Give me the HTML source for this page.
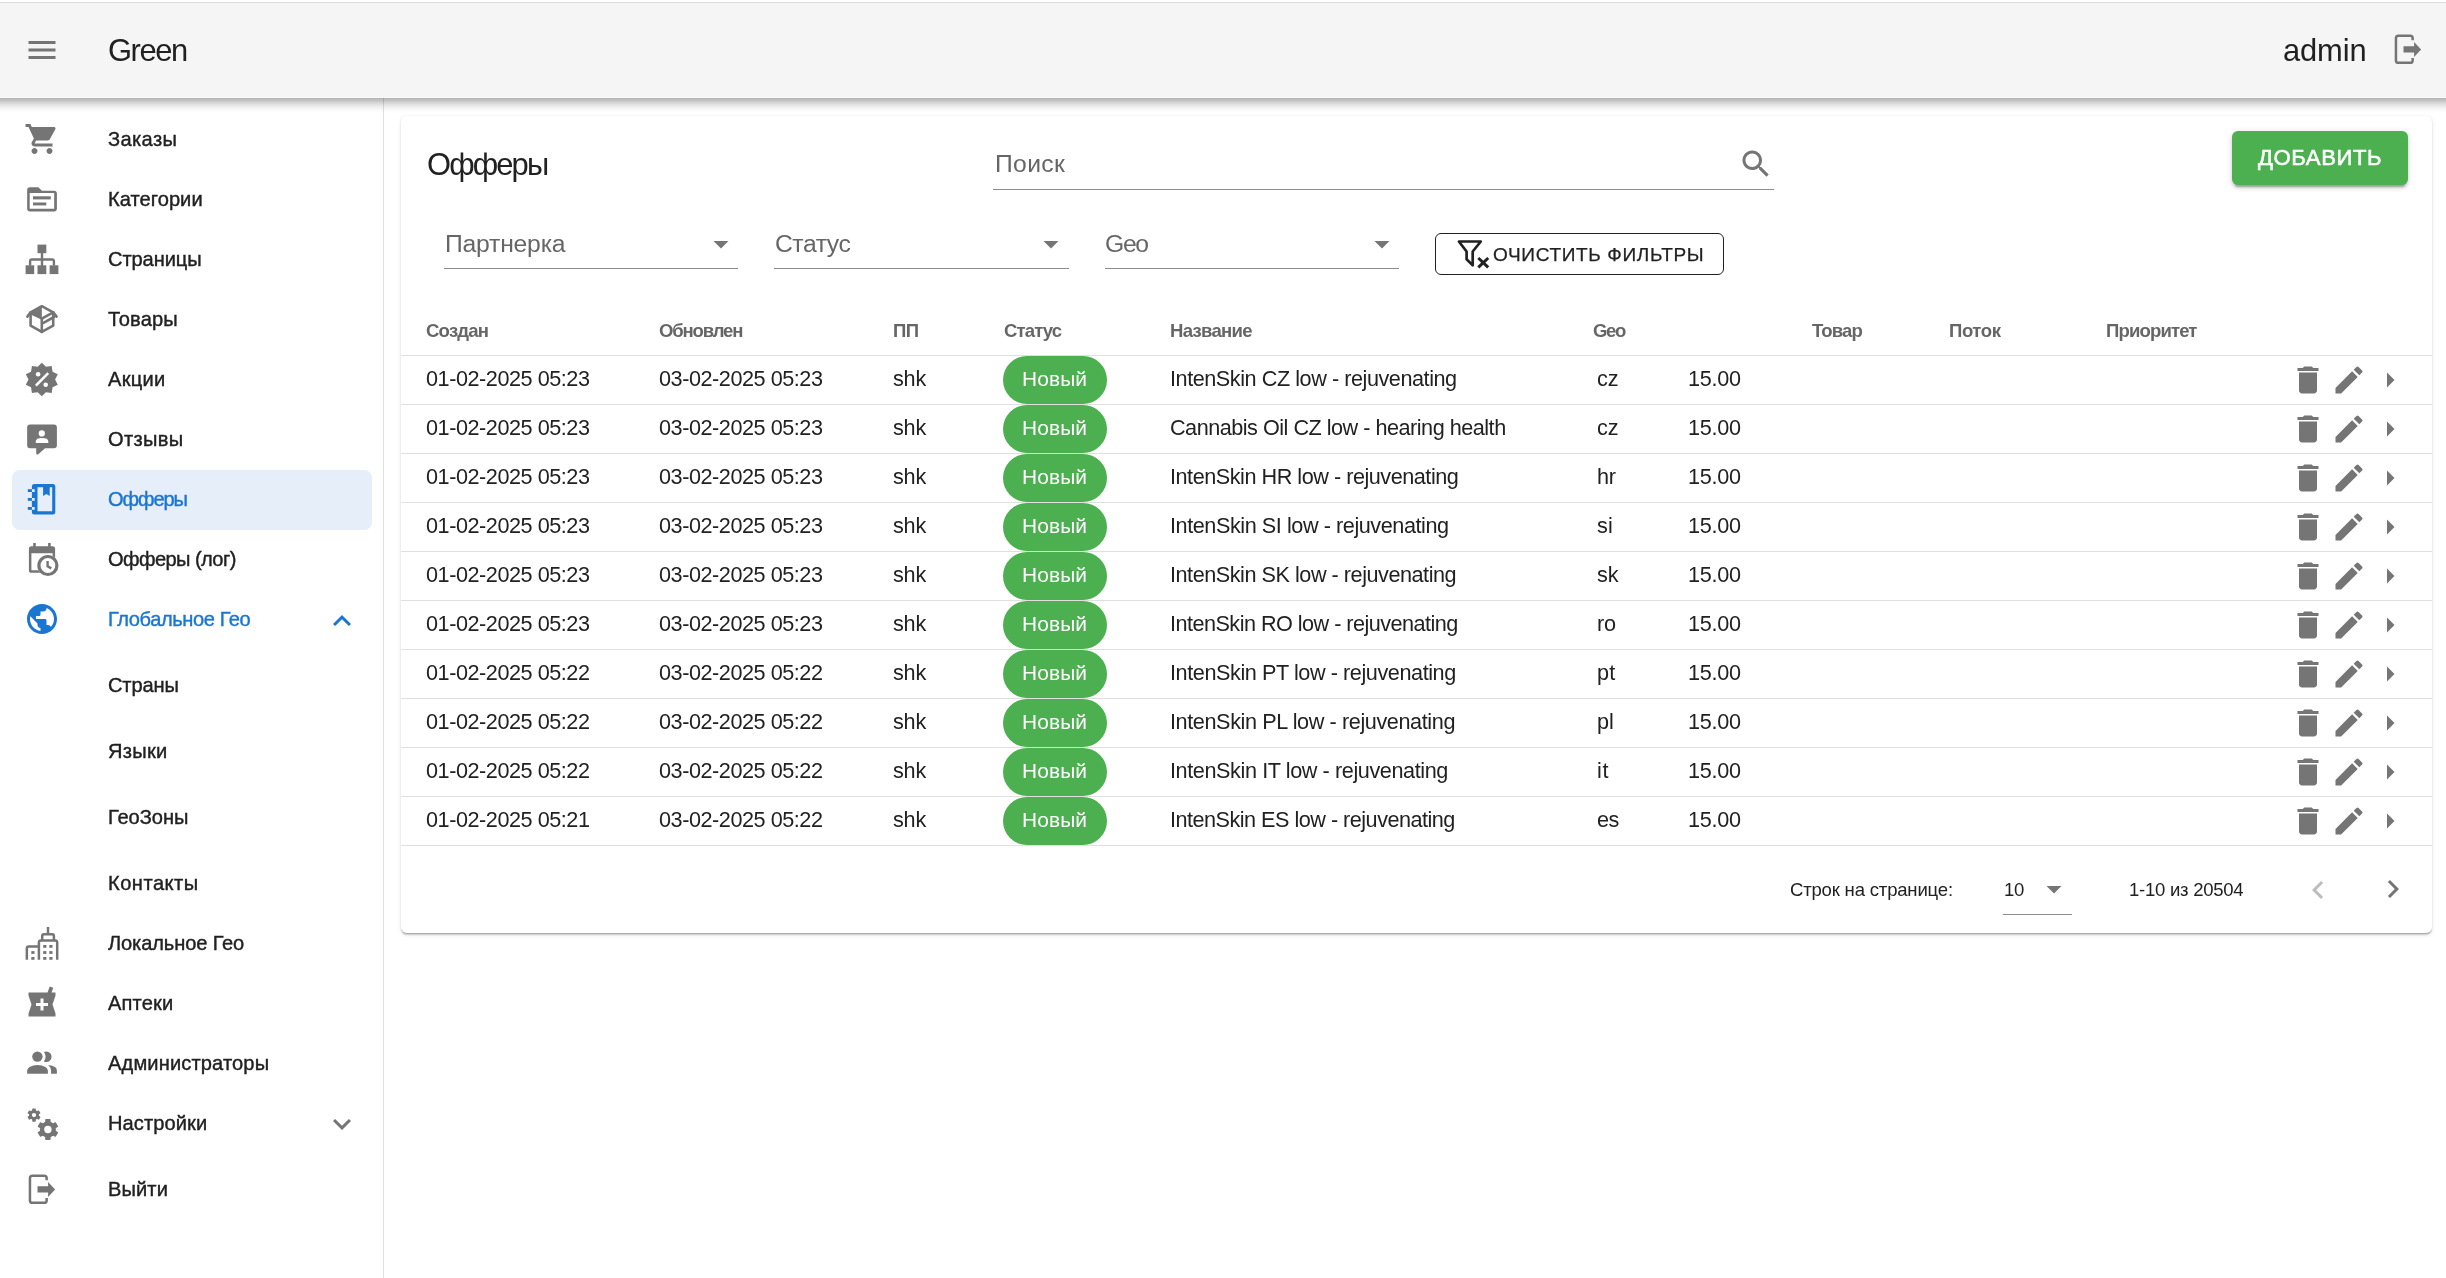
<!DOCTYPE html>
<html><head><meta charset="utf-8"><title>Офферы</title>
<style>
html,body{margin:0;padding:0;background:#fff;}
body{width:2446px;height:1278px;position:relative;overflow:hidden;font-family:"Liberation Sans",sans-serif;}
.t{position:absolute;white-space:nowrap;line-height:normal;will-change:transform;}
svg{display:block}
</style></head><body>

<div style="position:absolute;left:0px;top:2px;width:2446px;height:1px;background:#dcdcdc"></div>
<div style="position:absolute;left:0px;top:3px;width:2446px;height:94px;background:#f5f5f5;z-index:5"></div>
<div style="position:absolute;left:0px;top:97px;width:2446px;height:1px;background:#f9f9f9;z-index:5"></div>
<div style="position:absolute;left:0px;top:98px;width:2446px;height:15px;background:linear-gradient(rgba(0,0,0,.298) 0px, rgba(0,0,0,.235) 2.5px, rgba(0,0,0,.173) 4.5px, rgba(0,0,0,.118) 6.5px, rgba(0,0,0,.075) 8.5px, rgba(0,0,0,.039) 10.5px, rgba(0,0,0,.018) 12.5px, rgba(0,0,0,0) 15px);z-index:5"></div>
<div style="position:absolute;left:0;top:0;width:2446px;height:98px;z-index:6">
<svg style="position:absolute;left:24px;top:31.5px;" width="36" height="36" viewBox="0 0 24 24"><path fill="#757575" d="M3 18h18v-2H3v2zm0-5h18v-2H3v2zm0-7v2h18V6H3z"/></svg>
<div class="t" style="left:108px;top:33px;font-size:30.9px;color:#212121;letter-spacing:-1.428px;">Green</div>
<div class="t" style="left:2283px;top:33px;font-size:30.9px;color:#212121;letter-spacing:-0.144px;">admin</div>
</div>
<div style="position:absolute;left:383px;top:98px;width:1px;height:1180px;background:#e0e0e0"></div>
<div style="position:absolute;left:12px;top:470px;width:360px;height:60px;background:#e6eef9;border-radius:8px"></div>
<div class="t" style="left:108px;top:128px;font-size:20.09px;color:#212121;letter-spacing:0.365px;-webkit-text-stroke:0.4px #212121;">Заказы</div>
<svg style="position:absolute;left:24px;top:121px;" width="36" height="36" viewBox="0 0 24 24"><path fill="#757575" d="M7 18c-1.1 0-1.99.9-1.99 2S5.9 22 7 22s2-.9 2-2-.9-2-2-2zM1 2v2h2l3.6 7.59-1.35 2.45c-.16.28-.25.61-.25.96 0 1.1.9 2 2 2h12v-2H7.42c-.14 0-.25-.11-.25-.25l.03-.12.9-1.63h7.45c.75 0 1.41-.41 1.75-1.03l3.58-6.49c.08-.14.12-.31.12-.48 0-.55-.45-1-1-1H5.21l-.94-2H1zm16 16c-1.1 0-1.99.9-1.99 2s.89 2 1.99 2 2-.9 2-2-.9-2-2-2z"/></svg>
<div class="t" style="left:108px;top:188px;font-size:20.09px;color:#212121;letter-spacing:0.049px;-webkit-text-stroke:0.4px #212121;">Категории</div>
<div class="t" style="left:108px;top:248px;font-size:20.09px;color:#212121;letter-spacing:-0.086px;-webkit-text-stroke:0.4px #212121;">Страницы</div>
<div class="t" style="left:108px;top:308px;font-size:20.09px;color:#212121;letter-spacing:0.130px;-webkit-text-stroke:0.4px #212121;">Товары</div>
<div class="t" style="left:108px;top:368px;font-size:20.09px;color:#212121;letter-spacing:0.287px;-webkit-text-stroke:0.4px #212121;">Акции</div>
<div class="t" style="left:108px;top:428px;font-size:20.09px;color:#212121;letter-spacing:0.331px;-webkit-text-stroke:0.4px #212121;">Отзывы</div>
<div class="t" style="left:108px;top:488px;font-size:20.09px;color:#1976d2;letter-spacing:-1.081px;-webkit-text-stroke:0.4px #1976d2;">Офферы</div>
<div class="t" style="left:108px;top:548px;font-size:20.09px;color:#212121;letter-spacing:-0.589px;-webkit-text-stroke:0.4px #212121;">Офферы (лог)</div>
<div class="t" style="left:108px;top:608px;font-size:20.09px;color:#1976d2;letter-spacing:-0.415px;-webkit-text-stroke:0.4px #1976d2;">Глобальное Гео</div>
<svg style="position:absolute;left:24px;top:601px;" width="36" height="36" viewBox="0 0 24 24"><path fill="#1976d2" d="M12 2C6.48 2 2 6.48 2 12s4.48 10 10 10 10-4.48 10-10S17.52 2 12 2zm-1 17.93c-3.95-.49-7-3.85-7-7.93 0-.62.08-1.21.21-1.79L9 15v1c0 1.1.9 2 2 2v1.93zm6.9-2.54c-.26-.81-1-1.39-1.9-1.39h-1v-3c0-.55-.45-1-1-1H8v-2h2c.55 0 1-.45 1-1V7h2c1.1 0 2-.9 2-2v-.41c2.93 1.19 5 4.06 5 7.41 0 2.08-.8 3.97-2.1 5.39z"/></svg>
<div class="t" style="left:108px;top:674px;font-size:20.09px;color:#212121;letter-spacing:-0.141px;-webkit-text-stroke:0.4px #212121;">Страны</div>
<div class="t" style="left:108px;top:740px;font-size:20.09px;color:#212121;letter-spacing:0.278px;-webkit-text-stroke:0.4px #212121;">Языки</div>
<div class="t" style="left:108px;top:806px;font-size:20.09px;color:#212121;letter-spacing:-0.047px;-webkit-text-stroke:0.4px #212121;">ГеоЗоны</div>
<div class="t" style="left:108px;top:872px;font-size:20.09px;color:#212121;letter-spacing:0.498px;-webkit-text-stroke:0.4px #212121;">Контакты</div>
<div class="t" style="left:108px;top:932px;font-size:20.09px;color:#212121;letter-spacing:-0.124px;-webkit-text-stroke:0.4px #212121;">Локальное Гео</div>
<div class="t" style="left:108px;top:992px;font-size:20.09px;color:#212121;letter-spacing:0.143px;-webkit-text-stroke:0.4px #212121;">Аптеки</div>
<svg style="position:absolute;left:24px;top:985px;" width="36" height="36" viewBox="0 0 24 24"><path fill="#757575" d="M21 5h-2.64l1.14-3.14L17.15 1l-1.46 4H3v2l2 6-2 6v2h18v-2l-2-6 2-6V5zm-5 9h-3v3h-2v-3H8v-2h3V9h2v3h3v2z"/></svg>
<div class="t" style="left:108px;top:1052px;font-size:20.09px;color:#212121;letter-spacing:0.137px;-webkit-text-stroke:0.4px #212121;">Администраторы</div>
<div class="t" style="left:108px;top:1112px;font-size:20.09px;color:#212121;letter-spacing:0.095px;-webkit-text-stroke:0.4px #212121;">Настройки</div>
<div class="t" style="left:108px;top:1178px;font-size:20.09px;color:#212121;letter-spacing:0.103px;-webkit-text-stroke:0.4px #212121;">Выйти</div>
<svg style="position:absolute;left:324px;top:602.5px;" width="36" height="36" viewBox="0 0 24 24"><path fill="#1976d2" d="M12 8l-6 6 1.41 1.41L12 10.83l4.59 4.58L18 14z"/></svg>
<svg style="position:absolute;left:324px;top:1105.5px;" width="36" height="36" viewBox="0 0 24 24"><path fill="#757575" d="M16.59 8.59 12 13.17 7.41 8.59 6 10l6 6 6-6z"/></svg>
<svg style="position:absolute;left:16px;top:176px;z-index:7" width="50" height="50" viewBox="0 0 50 50"><path fill="#757575" fill-rule="evenodd" d="M14 11.35H22.3L26 14.7H38Q40.9 14.7 40.9 17.6V32.5Q40.9 35.4 38 35.4H14Q11.15 35.4 11.15 32.5V14.2Q11.15 11.35 14 11.35ZM13.7 17V32.7H38.2V17Z"/><rect fill="#757575" x="17" y="20.3" width="17.8" height="3.1"/><rect fill="#757575" x="17" y="26.5" width="13.3" height="2.9"/></svg>
<svg style="position:absolute;left:16px;top:236px;z-index:7" width="50" height="50" viewBox="0 0 50 50"><g fill="#757575"><rect x="21.5" y="8.6" width="8.8" height="8.6"/><rect x="24.8" y="17" width="2.4" height="13"/><path d="M12.9 29.5V25.3Q12.9 22.3 15.9 22.3H36.1Q39.1 22.3 39.1 25.3V29.5H36.7V24.8H15.3V29.5Z"/><rect x="9.6" y="29.3" width="8.6" height="8.8"/><rect x="21.5" y="29.3" width="8.8" height="8.8"/><rect x="33.6" y="29.3" width="8.8" height="8.8"/></g></svg>
<svg style="position:absolute;left:16px;top:296px;z-index:7" width="50" height="50" viewBox="0 0 50 50"><g fill="none" stroke="#757575" stroke-width="2.6" stroke-linejoin="round" stroke-linecap="round"><path d="M14.6 16.3L25.8 10.2L37.2 16.3V29.6L25.8 35.9L14.6 29.6Z"/><path d="M25.8 23V35.9"/><path d="M14.6 16.3L11.4 20.6"/><path d="M37.2 16.3L40.6 20.6"/><path d="M25.8 22.6L37.2 16.3"/><path d="M27.5 26.8L38 21"/></g><path fill="#757575" d="M14.6 16.3L25.8 10.2V23.8L15.6 19Z"/></svg>
<svg style="position:absolute;left:16px;top:356px;z-index:7" width="50" height="50" viewBox="0 0 50 50"><polygon fill="#757575" points="25.80,6.70 29.91,10.85 35.67,9.91 36.56,15.68 41.78,18.31 39.10,23.50 41.78,28.69 36.56,31.32 35.67,37.09 29.91,36.15 25.80,40.30 21.69,36.15 15.93,37.09 15.04,31.32 9.82,28.69 12.50,23.50 9.82,18.31 15.04,15.68 15.93,9.91 21.69,10.85"/><circle fill="#fff" cx="22.1" cy="18.2" r="2.3"/><circle fill="#fff" cx="29.7" cy="28.8" r="2.3"/><path stroke="#fff" stroke-width="2.6" d="M19.9 29.6L32.2 17.1"/></svg>
<svg style="position:absolute;left:16px;top:416px;z-index:7" width="50" height="50" viewBox="0 0 50 50"><path fill="#757575" d="M14.2 8.4H37.9Q40.9 8.4 40.9 11.4V29.3Q40.9 32.3 37.9 32.3H29.1L22.2 38.2Q20.2 39.2 20.2 37V32.3H14.2Q11.15 32.3 11.15 29.3V11.4Q11.15 8.4 14.2 8.4Z"/><circle fill="#fff" cx="25.8" cy="17.4" r="3.1"/><path fill="#fff" d="M19.8 27V25.3Q19.8 21.9 25.9 21.9Q32.3 21.9 32.3 25.3V27Z"/></svg>
<svg style="position:absolute;left:16px;top:476px;z-index:7" width="50" height="50" viewBox="0 0 50 50"><path fill="#1976d2" fill-rule="evenodd" d="M18.4 8H36.8Q39.3 8 39.3 10.5V35.9Q39.3 38.4 36.8 38.4H18.4Q15.9 38.4 15.9 35.9V10.5Q15.9 8 18.4 8ZM21.5 11.2V35.25H36.2V11.2Z"/><path fill="#1976d2" d="M27.1 11H33.7V20L30.4 18L27.1 20Z"/><rect x="11.8" y="13.2" width="4.2" height="2.8" fill="#1976d2"/><rect x="15.9" y="13.2" width="2.8" height="2.8" fill="#e6eef9"/><rect x="11.8" y="22.0" width="4.2" height="2.8" fill="#1976d2"/><rect x="15.9" y="22.0" width="2.8" height="2.8" fill="#e6eef9"/><rect x="11.8" y="31.0" width="4.2" height="2.8" fill="#1976d2"/><rect x="15.9" y="31.0" width="2.8" height="2.8" fill="#e6eef9"/></svg>
<svg style="position:absolute;left:16px;top:536px;z-index:7" width="50" height="50" viewBox="0 0 50 50"><g fill="#757575"><path fill-rule="evenodd" d="M15.5 10.2H36.5Q39.1 10.2 39.1 12.8V34.2Q39.1 36.8 36.5 36.8H15.5Q12.9 36.8 12.9 34.2V12.8Q12.9 10.2 15.5 10.2ZM15.4 17.2V34.2H36.6V17.2Z"/><rect x="17.2" y="7" width="2.6" height="4"/><rect x="32.1" y="7" width="2.6" height="4"/></g><circle cx="31.9" cy="29.5" r="10.6" fill="#fff"/><circle cx="31.9" cy="29.5" r="9" fill="none" stroke="#757575" stroke-width="3.2"/><path d="M31.6 25V30.2L35.3 32.4" fill="none" stroke="#757575" stroke-width="2.4"/></svg>
<svg style="position:absolute;left:16px;top:920px;z-index:7" width="50" height="50" viewBox="0 0 50 50"><g fill="none" stroke="#757575" stroke-width="2.5"><path d="M10.85 39.8V28.3Q10.85 26.4 12.8 26.4H22.9"/><path d="M22.9 39.8V22.5Q22.9 20.4 25 20.4H39.1Q41.2 20.4 41.2 22.5V39.8"/><path d="M26.2 20.4V16.1Q26.2 14.3 28 14.3H36.1Q37.9 14.3 37.9 16.1V20.4"/><path d="M32 7V14.3"/></g><g fill="#757575"><rect x="15.3" y="31.1" width="3.2" height="2.8"/><rect x="15.3" y="37" width="3.2" height="2.8"/><rect x="27.2" y="25" width="3.2" height="2.8"/><rect x="33.3" y="25" width="3.2" height="2.8"/><rect x="27.2" y="31.1" width="3.2" height="2.8"/><rect x="33.3" y="31.1" width="3.2" height="2.8"/><rect x="27.2" y="37" width="3.2" height="2.8"/><rect x="33.3" y="37" width="3.2" height="2.8"/></g></svg>
<svg style="position:absolute;left:16px;top:1040px;z-index:7" width="50" height="50" viewBox="0 0 50 50"><g fill="#757575"><circle cx="21.4" cy="16.6" r="5.2"/><path d="M27.9 11.9Q29 11.5 30.4 11.5A5.2 5.2 0 0 1 30.4 21.9Q29 21.9 27.9 21.4Q29.6 19.4 29.6 16.6Q29.6 13.9 27.9 11.9Z"/><path d="M11.15 33.8V30.8Q11.15 28.4 13.6 27Q17 25 21.5 25Q26 25 29.4 27Q31.9 28.4 31.9 30.8V33.8Z"/><path d="M32.3 25Q36.5 25.3 39 27Q40.9 28.3 40.9 30.8V33.8H35.1V30.8Q35.1 27.7 32.3 25Z"/></g></svg>
<svg style="position:absolute;left:16px;top:1100px;z-index:7" width="50" height="50" viewBox="0 0 50 50"><circle cx="18" cy="15.06" r="5.0" fill="#757575"/><rect x="16.20" y="8.46" width="3.6" height="6.60" rx="0.6" fill="#757575" transform="rotate(0 18 15.06)"/><rect x="16.20" y="8.46" width="3.6" height="6.60" rx="0.6" fill="#757575" transform="rotate(60 18 15.06)"/><rect x="16.20" y="8.46" width="3.6" height="6.60" rx="0.6" fill="#757575" transform="rotate(120 18 15.06)"/><rect x="16.20" y="8.46" width="3.6" height="6.60" rx="0.6" fill="#757575" transform="rotate(180 18 15.06)"/><rect x="16.20" y="8.46" width="3.6" height="6.60" rx="0.6" fill="#757575" transform="rotate(240 18 15.06)"/><rect x="16.20" y="8.46" width="3.6" height="6.60" rx="0.6" fill="#757575" transform="rotate(300 18 15.06)"/><circle cx="18" cy="15.06" r="2.15" fill="#fff"/><circle cx="31.9" cy="29.5" r="8.0" fill="#757575"/><rect x="29.20" y="19.10" width="5.4" height="10.40" rx="0.6" fill="#757575" transform="rotate(0 31.9 29.5)"/><rect x="29.20" y="19.10" width="5.4" height="10.40" rx="0.6" fill="#757575" transform="rotate(60 31.9 29.5)"/><rect x="29.20" y="19.10" width="5.4" height="10.40" rx="0.6" fill="#757575" transform="rotate(120 31.9 29.5)"/><rect x="29.20" y="19.10" width="5.4" height="10.40" rx="0.6" fill="#757575" transform="rotate(180 31.9 29.5)"/><rect x="29.20" y="19.10" width="5.4" height="10.40" rx="0.6" fill="#757575" transform="rotate(240 31.9 29.5)"/><rect x="29.20" y="19.10" width="5.4" height="10.40" rx="0.6" fill="#757575" transform="rotate(300 31.9 29.5)"/><circle cx="31.9" cy="29.5" r="3.7" fill="#fff"/></svg>
<svg style="position:absolute;left:16px;top:1164px;z-index:7" width="50" height="50" viewBox="0 0 50 50"><path fill="none" stroke="#757575" stroke-width="2.5" d="M30.65 16.2V14.3Q30.65 11.85 28.2 11.85H16.4Q13.95 11.85 13.95 14.3V36.4Q13.95 38.85 16.4 38.85H28.2Q30.65 38.85 30.65 36.4V34"/><path fill="#757575" d="M21.5 22.3H32.1V18L39.1 25.4L32.1 32.9V28.4H21.5Z"/></svg>
<svg style="position:absolute;left:2382px;top:24px;z-index:7" width="50" height="50" viewBox="0 0 50 50"><path fill="none" stroke="#757575" stroke-width="2.5" d="M30.65 16.2V14.3Q30.65 11.85 28.2 11.85H16.4Q13.95 11.85 13.95 14.3V36.4Q13.95 38.85 16.4 38.85H28.2Q30.65 38.85 30.65 36.4V34"/><path fill="#757575" d="M21.5 22.3H32.1V18L39.1 25.4L32.1 32.9V28.4H21.5Z"/></svg>
<svg style="position:absolute;left:1450px;top:233px;z-index:7" width="50" height="42" viewBox="0 0 50 42"><g fill="none" stroke="#212121" stroke-width="2.7" stroke-linejoin="round"><path d="M8.9 8.5H30.8L22.7 18.5V32.3L16.6 26.3V18.5Z"/><path stroke-width="3" d="M28.3 25L38.2 34.3M38.2 25L28.3 34.3"/></g></svg>
<div style="position:absolute;left:401px;top:116px;width:2031px;height:817px;background:#fff;border-radius:6px;box-shadow:0 2px 1.5px -1.5px rgba(0,0,0,.2),0 1.5px 1.5px 0 rgba(0,0,0,.12),0 1.5px 4.5px 0 rgba(0,0,0,.10)"></div>
<div class="t" style="left:427px;top:147px;font-size:30.9px;color:#212121;letter-spacing:-1.865px;">Офферы</div>
<div class="t" style="left:995px;top:150px;font-size:24.72px;color:#666;letter-spacing:0.341px;">Поиск</div>
<div style="position:absolute;left:993px;top:189px;width:781px;height:1px;background:#8c8c8c"></div>
<svg style="position:absolute;left:1737.5px;top:145.5px;" width="36" height="36" viewBox="0 0 24 24"><path fill="#757575" d="M15.5 14h-.79l-.28-.27C15.41 12.59 16 11.11 16 9.5 16 5.91 13.09 3 9.5 3S3 5.91 3 9.5 5.91 16 9.5 16c1.61 0 3.09-.59 4.23-1.57l.27.28v.79l5 4.99L20.49 19l-4.99-5zm-6 0C7.01 14 5 11.99 5 9.5S7.01 5 9.5 5 14 7.01 14 9.5 11.99 14 9.5 14z"/></svg>
<div style="position:absolute;left:2232px;top:131px;width:176px;height:54px;background:#4caf50;border-radius:6px;box-shadow:0 4.5px 1.5px -3px rgba(0,0,0,.2),0 3px 3px 0 rgba(0,0,0,.14),0 1.5px 7.5px 0 rgba(0,0,0,.12)"></div>
<div class="t" style="left:2258px;top:145px;font-size:22.14px;color:#fff;letter-spacing:0.543px;-webkit-text-stroke:0.55px #fff;">ДОБАВИТЬ</div>
<div class="t" style="left:445px;top:230px;font-size:24.72px;color:#666;letter-spacing:-0.219px;">Партнерка</div>
<div style="position:absolute;left:444px;top:268px;width:294px;height:1px;background:#8c8c8c"></div>
<svg style="position:absolute;left:702.5px;top:225.5px;" width="36" height="36" viewBox="0 0 24 24"><path fill="#757575" d="M7 10l5 5 5-5z"/></svg>
<div class="t" style="left:774.5px;top:230px;font-size:24.72px;color:#666;letter-spacing:-0.477px;">Статус</div>
<div style="position:absolute;left:774px;top:268px;width:295px;height:1px;background:#8c8c8c"></div>
<svg style="position:absolute;left:1032.5px;top:225.5px;" width="36" height="36" viewBox="0 0 24 24"><path fill="#757575" d="M7 10l5 5 5-5z"/></svg>
<div class="t" style="left:1104.5px;top:230px;font-size:24.72px;color:#666;letter-spacing:-1.323px;">Geo</div>
<div style="position:absolute;left:1105px;top:268px;width:294px;height:1px;background:#8c8c8c"></div>
<svg style="position:absolute;left:1363.5px;top:225.5px;" width="36" height="36" viewBox="0 0 24 24"><path fill="#757575" d="M7 10l5 5 5-5z"/></svg>
<div style="position:absolute;left:1435px;top:233px;width:289px;height:42px;box-sizing:border-box;border:1.5px solid #212121;border-radius:6px"></div>
<div class="t" style="left:1493px;top:244px;font-size:19.05px;color:#212121;letter-spacing:0.643px;-webkit-text-stroke:0.25px #212121;">ОЧИСТИТЬ ФИЛЬТРЫ</div>
<div class="t" style="left:426px;top:320px;font-size:18.54px;color:#666;font-weight:700;letter-spacing:-0.776px;">Создан</div>
<div class="t" style="left:659px;top:320px;font-size:18.54px;color:#666;font-weight:700;letter-spacing:-1.156px;">Обновлен</div>
<div class="t" style="left:893px;top:320px;font-size:18.54px;color:#666;font-weight:700;letter-spacing:-0.539px;">ПП</div>
<div class="t" style="left:1004px;top:320px;font-size:18.54px;color:#666;font-weight:700;letter-spacing:-0.865px;">Статус</div>
<div class="t" style="left:1170px;top:320px;font-size:18.54px;color:#666;font-weight:700;letter-spacing:-0.709px;">Название</div>
<div class="t" style="left:1593px;top:320px;font-size:18.54px;color:#666;font-weight:700;letter-spacing:-1.307px;">Geo</div>
<div class="t" style="left:1812px;top:320px;font-size:18.54px;color:#666;font-weight:700;letter-spacing:-0.847px;">Товар</div>
<div class="t" style="left:1949px;top:320px;font-size:18.54px;color:#666;font-weight:700;letter-spacing:-0.409px;">Поток</div>
<div class="t" style="left:2106px;top:320px;font-size:18.54px;color:#666;font-weight:700;letter-spacing:-0.854px;">Приоритет</div>
<div style="position:absolute;left:401px;top:355px;width:2031px;height:1px;background:#e0e0e0"></div>
<div style="position:absolute;left:401px;top:404px;width:2031px;height:1px;background:#e0e0e0"></div>
<div class="t" style="left:426px;top:366px;font-size:21.63px;color:#212121;letter-spacing:-0.451px;">01-02-2025 05:23</div>
<div class="t" style="left:659px;top:366px;font-size:21.63px;color:#212121;letter-spacing:-0.451px;">03-02-2025 05:23</div>
<div class="t" style="left:893px;top:366px;font-size:21.63px;color:#212121;letter-spacing:-0.198px;">shk</div>
<div style="position:absolute;left:1003px;top:356px;width:104px;height:48px;background:#4caf50;border-radius:24px"></div>
<div class="t" style="left:1022px;top:367px;font-size:20.91px;color:#fff;letter-spacing:0.109px;">Новый</div>
<div class="t" style="left:1170px;top:366px;font-size:21.63px;color:#212121;letter-spacing:-0.445px;">IntenSkin CZ low - rejuvenating</div>
<div class="t" style="left:1597px;top:366px;font-size:21.63px;color:#212121;letter-spacing:-0.102px;">cz</div>
<div class="t" style="left:1688px;top:366px;font-size:21.63px;color:#212121;letter-spacing:-0.275px;">15.00</div>
<svg style="position:absolute;left:2289.7px;top:361.5px;" width="36" height="36" viewBox="0 0 24 24"><path fill="#757575" d="M6 19c0 1.1.9 2 2 2h8c1.1 0 2-.9 2-2V7H6v12zM19 4h-3.5l-1-1h-5l-1 1H5v2h14V4z"/></svg>
<svg style="position:absolute;left:2330.6px;top:361.5px;" width="36" height="36" viewBox="0 0 24 24"><path fill="#757575" d="M3 17.25V21h3.75L17.81 9.94l-3.75-3.75L3 17.25zM20.71 7.04c.39-.39.39-1.02 0-1.41l-2.34-2.34a.9959.9959 0 0 0-1.41 0l-1.83 1.83 3.75 3.75 1.83-1.83z"/></svg>
<svg style="position:absolute;left:2372px;top:361.5px;" width="36" height="36" viewBox="0 0 24 24"><path fill="#757575" d="M10 17l5-5-5-5v10z"/></svg>
<div style="position:absolute;left:401px;top:453px;width:2031px;height:1px;background:#e0e0e0"></div>
<div class="t" style="left:426px;top:415px;font-size:21.63px;color:#212121;letter-spacing:-0.451px;">01-02-2025 05:23</div>
<div class="t" style="left:659px;top:415px;font-size:21.63px;color:#212121;letter-spacing:-0.451px;">03-02-2025 05:23</div>
<div class="t" style="left:893px;top:415px;font-size:21.63px;color:#212121;letter-spacing:-0.198px;">shk</div>
<div style="position:absolute;left:1003px;top:405px;width:104px;height:48px;background:#4caf50;border-radius:24px"></div>
<div class="t" style="left:1022px;top:416px;font-size:20.91px;color:#fff;letter-spacing:0.109px;">Новый</div>
<div class="t" style="left:1170px;top:415px;font-size:21.63px;color:#212121;letter-spacing:-0.492px;">Cannabis Oil CZ low - hearing health</div>
<div class="t" style="left:1597px;top:415px;font-size:21.63px;color:#212121;letter-spacing:-0.102px;">cz</div>
<div class="t" style="left:1688px;top:415px;font-size:21.63px;color:#212121;letter-spacing:-0.275px;">15.00</div>
<svg style="position:absolute;left:2289.7px;top:410.5px;" width="36" height="36" viewBox="0 0 24 24"><path fill="#757575" d="M6 19c0 1.1.9 2 2 2h8c1.1 0 2-.9 2-2V7H6v12zM19 4h-3.5l-1-1h-5l-1 1H5v2h14V4z"/></svg>
<svg style="position:absolute;left:2330.6px;top:410.5px;" width="36" height="36" viewBox="0 0 24 24"><path fill="#757575" d="M3 17.25V21h3.75L17.81 9.94l-3.75-3.75L3 17.25zM20.71 7.04c.39-.39.39-1.02 0-1.41l-2.34-2.34a.9959.9959 0 0 0-1.41 0l-1.83 1.83 3.75 3.75 1.83-1.83z"/></svg>
<svg style="position:absolute;left:2372px;top:410.5px;" width="36" height="36" viewBox="0 0 24 24"><path fill="#757575" d="M10 17l5-5-5-5v10z"/></svg>
<div style="position:absolute;left:401px;top:502px;width:2031px;height:1px;background:#e0e0e0"></div>
<div class="t" style="left:426px;top:464px;font-size:21.63px;color:#212121;letter-spacing:-0.451px;">01-02-2025 05:23</div>
<div class="t" style="left:659px;top:464px;font-size:21.63px;color:#212121;letter-spacing:-0.451px;">03-02-2025 05:23</div>
<div class="t" style="left:893px;top:464px;font-size:21.63px;color:#212121;letter-spacing:-0.198px;">shk</div>
<div style="position:absolute;left:1003px;top:454px;width:104px;height:48px;background:#4caf50;border-radius:24px"></div>
<div class="t" style="left:1022px;top:465px;font-size:20.91px;color:#fff;letter-spacing:0.109px;">Новый</div>
<div class="t" style="left:1170px;top:464px;font-size:21.63px;color:#212121;letter-spacing:-0.469px;">IntenSkin HR low - rejuvenating</div>
<div class="t" style="left:1597px;top:464px;font-size:21.63px;color:#212121;letter-spacing:-0.273px;">hr</div>
<div class="t" style="left:1688px;top:464px;font-size:21.63px;color:#212121;letter-spacing:-0.275px;">15.00</div>
<svg style="position:absolute;left:2289.7px;top:459.5px;" width="36" height="36" viewBox="0 0 24 24"><path fill="#757575" d="M6 19c0 1.1.9 2 2 2h8c1.1 0 2-.9 2-2V7H6v12zM19 4h-3.5l-1-1h-5l-1 1H5v2h14V4z"/></svg>
<svg style="position:absolute;left:2330.6px;top:459.5px;" width="36" height="36" viewBox="0 0 24 24"><path fill="#757575" d="M3 17.25V21h3.75L17.81 9.94l-3.75-3.75L3 17.25zM20.71 7.04c.39-.39.39-1.02 0-1.41l-2.34-2.34a.9959.9959 0 0 0-1.41 0l-1.83 1.83 3.75 3.75 1.83-1.83z"/></svg>
<svg style="position:absolute;left:2372px;top:459.5px;" width="36" height="36" viewBox="0 0 24 24"><path fill="#757575" d="M10 17l5-5-5-5v10z"/></svg>
<div style="position:absolute;left:401px;top:551px;width:2031px;height:1px;background:#e0e0e0"></div>
<div class="t" style="left:426px;top:513px;font-size:21.63px;color:#212121;letter-spacing:-0.451px;">01-02-2025 05:23</div>
<div class="t" style="left:659px;top:513px;font-size:21.63px;color:#212121;letter-spacing:-0.451px;">03-02-2025 05:23</div>
<div class="t" style="left:893px;top:513px;font-size:21.63px;color:#212121;letter-spacing:-0.198px;">shk</div>
<div style="position:absolute;left:1003px;top:503px;width:104px;height:48px;background:#4caf50;border-radius:24px"></div>
<div class="t" style="left:1022px;top:514px;font-size:20.91px;color:#fff;letter-spacing:0.109px;">Новый</div>
<div class="t" style="left:1170px;top:513px;font-size:21.63px;color:#212121;letter-spacing:-0.434px;">IntenSkin SI low - rejuvenating</div>
<div class="t" style="left:1597px;top:513px;font-size:21.63px;color:#212121;letter-spacing:0.164px;">si</div>
<div class="t" style="left:1688px;top:513px;font-size:21.63px;color:#212121;letter-spacing:-0.275px;">15.00</div>
<svg style="position:absolute;left:2289.7px;top:508.5px;" width="36" height="36" viewBox="0 0 24 24"><path fill="#757575" d="M6 19c0 1.1.9 2 2 2h8c1.1 0 2-.9 2-2V7H6v12zM19 4h-3.5l-1-1h-5l-1 1H5v2h14V4z"/></svg>
<svg style="position:absolute;left:2330.6px;top:508.5px;" width="36" height="36" viewBox="0 0 24 24"><path fill="#757575" d="M3 17.25V21h3.75L17.81 9.94l-3.75-3.75L3 17.25zM20.71 7.04c.39-.39.39-1.02 0-1.41l-2.34-2.34a.9959.9959 0 0 0-1.41 0l-1.83 1.83 3.75 3.75 1.83-1.83z"/></svg>
<svg style="position:absolute;left:2372px;top:508.5px;" width="36" height="36" viewBox="0 0 24 24"><path fill="#757575" d="M10 17l5-5-5-5v10z"/></svg>
<div style="position:absolute;left:401px;top:600px;width:2031px;height:1px;background:#e0e0e0"></div>
<div class="t" style="left:426px;top:562px;font-size:21.63px;color:#212121;letter-spacing:-0.451px;">01-02-2025 05:23</div>
<div class="t" style="left:659px;top:562px;font-size:21.63px;color:#212121;letter-spacing:-0.451px;">03-02-2025 05:23</div>
<div class="t" style="left:893px;top:562px;font-size:21.63px;color:#212121;letter-spacing:-0.198px;">shk</div>
<div style="position:absolute;left:1003px;top:552px;width:104px;height:48px;background:#4caf50;border-radius:24px"></div>
<div class="t" style="left:1022px;top:563px;font-size:20.91px;color:#fff;letter-spacing:0.109px;">Новый</div>
<div class="t" style="left:1170px;top:562px;font-size:21.63px;color:#212121;letter-spacing:-0.465px;">IntenSkin SK low - rejuvenating</div>
<div class="t" style="left:1597px;top:562px;font-size:21.63px;color:#212121;letter-spacing:-0.070px;">sk</div>
<div class="t" style="left:1688px;top:562px;font-size:21.63px;color:#212121;letter-spacing:-0.275px;">15.00</div>
<svg style="position:absolute;left:2289.7px;top:557.5px;" width="36" height="36" viewBox="0 0 24 24"><path fill="#757575" d="M6 19c0 1.1.9 2 2 2h8c1.1 0 2-.9 2-2V7H6v12zM19 4h-3.5l-1-1h-5l-1 1H5v2h14V4z"/></svg>
<svg style="position:absolute;left:2330.6px;top:557.5px;" width="36" height="36" viewBox="0 0 24 24"><path fill="#757575" d="M3 17.25V21h3.75L17.81 9.94l-3.75-3.75L3 17.25zM20.71 7.04c.39-.39.39-1.02 0-1.41l-2.34-2.34a.9959.9959 0 0 0-1.41 0l-1.83 1.83 3.75 3.75 1.83-1.83z"/></svg>
<svg style="position:absolute;left:2372px;top:557.5px;" width="36" height="36" viewBox="0 0 24 24"><path fill="#757575" d="M10 17l5-5-5-5v10z"/></svg>
<div style="position:absolute;left:401px;top:649px;width:2031px;height:1px;background:#e0e0e0"></div>
<div class="t" style="left:426px;top:611px;font-size:21.63px;color:#212121;letter-spacing:-0.451px;">01-02-2025 05:23</div>
<div class="t" style="left:659px;top:611px;font-size:21.63px;color:#212121;letter-spacing:-0.451px;">03-02-2025 05:23</div>
<div class="t" style="left:893px;top:611px;font-size:21.63px;color:#212121;letter-spacing:-0.198px;">shk</div>
<div style="position:absolute;left:1003px;top:601px;width:104px;height:48px;background:#4caf50;border-radius:24px"></div>
<div class="t" style="left:1022px;top:612px;font-size:20.91px;color:#fff;letter-spacing:0.109px;">Новый</div>
<div class="t" style="left:1170px;top:611px;font-size:21.63px;color:#212121;letter-spacing:-0.525px;">IntenSkin RO low - rejuvenating</div>
<div class="t" style="left:1597px;top:611px;font-size:21.63px;color:#212121;letter-spacing:-0.172px;">ro</div>
<div class="t" style="left:1688px;top:611px;font-size:21.63px;color:#212121;letter-spacing:-0.275px;">15.00</div>
<svg style="position:absolute;left:2289.7px;top:606.5px;" width="36" height="36" viewBox="0 0 24 24"><path fill="#757575" d="M6 19c0 1.1.9 2 2 2h8c1.1 0 2-.9 2-2V7H6v12zM19 4h-3.5l-1-1h-5l-1 1H5v2h14V4z"/></svg>
<svg style="position:absolute;left:2330.6px;top:606.5px;" width="36" height="36" viewBox="0 0 24 24"><path fill="#757575" d="M3 17.25V21h3.75L17.81 9.94l-3.75-3.75L3 17.25zM20.71 7.04c.39-.39.39-1.02 0-1.41l-2.34-2.34a.9959.9959 0 0 0-1.41 0l-1.83 1.83 3.75 3.75 1.83-1.83z"/></svg>
<svg style="position:absolute;left:2372px;top:606.5px;" width="36" height="36" viewBox="0 0 24 24"><path fill="#757575" d="M10 17l5-5-5-5v10z"/></svg>
<div style="position:absolute;left:401px;top:698px;width:2031px;height:1px;background:#e0e0e0"></div>
<div class="t" style="left:426px;top:660px;font-size:21.63px;color:#212121;letter-spacing:-0.451px;">01-02-2025 05:22</div>
<div class="t" style="left:659px;top:660px;font-size:21.63px;color:#212121;letter-spacing:-0.451px;">03-02-2025 05:22</div>
<div class="t" style="left:893px;top:660px;font-size:21.63px;color:#212121;letter-spacing:-0.198px;">shk</div>
<div style="position:absolute;left:1003px;top:650px;width:104px;height:48px;background:#4caf50;border-radius:24px"></div>
<div class="t" style="left:1022px;top:661px;font-size:20.91px;color:#fff;letter-spacing:0.109px;">Новый</div>
<div class="t" style="left:1170px;top:660px;font-size:21.63px;color:#212121;letter-spacing:-0.422px;">IntenSkin PT low - rejuvenating</div>
<div class="t" style="left:1597px;top:660px;font-size:21.63px;color:#212121;letter-spacing:0.312px;">pt</div>
<div class="t" style="left:1688px;top:660px;font-size:21.63px;color:#212121;letter-spacing:-0.275px;">15.00</div>
<svg style="position:absolute;left:2289.7px;top:655.5px;" width="36" height="36" viewBox="0 0 24 24"><path fill="#757575" d="M6 19c0 1.1.9 2 2 2h8c1.1 0 2-.9 2-2V7H6v12zM19 4h-3.5l-1-1h-5l-1 1H5v2h14V4z"/></svg>
<svg style="position:absolute;left:2330.6px;top:655.5px;" width="36" height="36" viewBox="0 0 24 24"><path fill="#757575" d="M3 17.25V21h3.75L17.81 9.94l-3.75-3.75L3 17.25zM20.71 7.04c.39-.39.39-1.02 0-1.41l-2.34-2.34a.9959.9959 0 0 0-1.41 0l-1.83 1.83 3.75 3.75 1.83-1.83z"/></svg>
<svg style="position:absolute;left:2372px;top:655.5px;" width="36" height="36" viewBox="0 0 24 24"><path fill="#757575" d="M10 17l5-5-5-5v10z"/></svg>
<div style="position:absolute;left:401px;top:747px;width:2031px;height:1px;background:#e0e0e0"></div>
<div class="t" style="left:426px;top:709px;font-size:21.63px;color:#212121;letter-spacing:-0.451px;">01-02-2025 05:22</div>
<div class="t" style="left:659px;top:709px;font-size:21.63px;color:#212121;letter-spacing:-0.451px;">03-02-2025 05:22</div>
<div class="t" style="left:893px;top:709px;font-size:21.63px;color:#212121;letter-spacing:-0.198px;">shk</div>
<div style="position:absolute;left:1003px;top:699px;width:104px;height:48px;background:#4caf50;border-radius:24px"></div>
<div class="t" style="left:1022px;top:710px;font-size:20.91px;color:#fff;letter-spacing:0.109px;">Новый</div>
<div class="t" style="left:1170px;top:709px;font-size:21.63px;color:#212121;letter-spacing:-0.397px;">IntenSkin PL low - rejuvenating</div>
<div class="t" style="left:1597px;top:709px;font-size:21.63px;color:#212121;letter-spacing:0.031px;">pl</div>
<div class="t" style="left:1688px;top:709px;font-size:21.63px;color:#212121;letter-spacing:-0.275px;">15.00</div>
<svg style="position:absolute;left:2289.7px;top:704.5px;" width="36" height="36" viewBox="0 0 24 24"><path fill="#757575" d="M6 19c0 1.1.9 2 2 2h8c1.1 0 2-.9 2-2V7H6v12zM19 4h-3.5l-1-1h-5l-1 1H5v2h14V4z"/></svg>
<svg style="position:absolute;left:2330.6px;top:704.5px;" width="36" height="36" viewBox="0 0 24 24"><path fill="#757575" d="M3 17.25V21h3.75L17.81 9.94l-3.75-3.75L3 17.25zM20.71 7.04c.39-.39.39-1.02 0-1.41l-2.34-2.34a.9959.9959 0 0 0-1.41 0l-1.83 1.83 3.75 3.75 1.83-1.83z"/></svg>
<svg style="position:absolute;left:2372px;top:704.5px;" width="36" height="36" viewBox="0 0 24 24"><path fill="#757575" d="M10 17l5-5-5-5v10z"/></svg>
<div style="position:absolute;left:401px;top:796px;width:2031px;height:1px;background:#e0e0e0"></div>
<div class="t" style="left:426px;top:758px;font-size:21.63px;color:#212121;letter-spacing:-0.451px;">01-02-2025 05:22</div>
<div class="t" style="left:659px;top:758px;font-size:21.63px;color:#212121;letter-spacing:-0.451px;">03-02-2025 05:22</div>
<div class="t" style="left:893px;top:758px;font-size:21.63px;color:#212121;letter-spacing:-0.198px;">shk</div>
<div style="position:absolute;left:1003px;top:748px;width:104px;height:48px;background:#4caf50;border-radius:24px"></div>
<div class="t" style="left:1022px;top:759px;font-size:20.91px;color:#fff;letter-spacing:0.109px;">Новый</div>
<div class="t" style="left:1170px;top:758px;font-size:21.63px;color:#212121;letter-spacing:-0.404px;">IntenSkin IT low - rejuvenating</div>
<div class="t" style="left:1597px;top:758px;font-size:21.63px;color:#212121;letter-spacing:0.586px;">it</div>
<div class="t" style="left:1688px;top:758px;font-size:21.63px;color:#212121;letter-spacing:-0.275px;">15.00</div>
<svg style="position:absolute;left:2289.7px;top:753.5px;" width="36" height="36" viewBox="0 0 24 24"><path fill="#757575" d="M6 19c0 1.1.9 2 2 2h8c1.1 0 2-.9 2-2V7H6v12zM19 4h-3.5l-1-1h-5l-1 1H5v2h14V4z"/></svg>
<svg style="position:absolute;left:2330.6px;top:753.5px;" width="36" height="36" viewBox="0 0 24 24"><path fill="#757575" d="M3 17.25V21h3.75L17.81 9.94l-3.75-3.75L3 17.25zM20.71 7.04c.39-.39.39-1.02 0-1.41l-2.34-2.34a.9959.9959 0 0 0-1.41 0l-1.83 1.83 3.75 3.75 1.83-1.83z"/></svg>
<svg style="position:absolute;left:2372px;top:753.5px;" width="36" height="36" viewBox="0 0 24 24"><path fill="#757575" d="M10 17l5-5-5-5v10z"/></svg>
<div style="position:absolute;left:401px;top:845px;width:2031px;height:1px;background:#e0e0e0"></div>
<div class="t" style="left:426px;top:807px;font-size:21.63px;color:#212121;letter-spacing:-0.451px;">01-02-2025 05:21</div>
<div class="t" style="left:659px;top:807px;font-size:21.63px;color:#212121;letter-spacing:-0.451px;">03-02-2025 05:22</div>
<div class="t" style="left:893px;top:807px;font-size:21.63px;color:#212121;letter-spacing:-0.198px;">shk</div>
<div style="position:absolute;left:1003px;top:797px;width:104px;height:48px;background:#4caf50;border-radius:24px"></div>
<div class="t" style="left:1022px;top:808px;font-size:20.91px;color:#fff;letter-spacing:0.109px;">Новый</div>
<div class="t" style="left:1170px;top:807px;font-size:21.63px;color:#212121;letter-spacing:-0.505px;">IntenSkin ES low - rejuvenating</div>
<div class="t" style="left:1597px;top:807px;font-size:21.63px;color:#212121;letter-spacing:-0.430px;">es</div>
<div class="t" style="left:1688px;top:807px;font-size:21.63px;color:#212121;letter-spacing:-0.275px;">15.00</div>
<svg style="position:absolute;left:2289.7px;top:802.5px;" width="36" height="36" viewBox="0 0 24 24"><path fill="#757575" d="M6 19c0 1.1.9 2 2 2h8c1.1 0 2-.9 2-2V7H6v12zM19 4h-3.5l-1-1h-5l-1 1H5v2h14V4z"/></svg>
<svg style="position:absolute;left:2330.6px;top:802.5px;" width="36" height="36" viewBox="0 0 24 24"><path fill="#757575" d="M3 17.25V21h3.75L17.81 9.94l-3.75-3.75L3 17.25zM20.71 7.04c.39-.39.39-1.02 0-1.41l-2.34-2.34a.9959.9959 0 0 0-1.41 0l-1.83 1.83 3.75 3.75 1.83-1.83z"/></svg>
<svg style="position:absolute;left:2372px;top:802.5px;" width="36" height="36" viewBox="0 0 24 24"><path fill="#757575" d="M10 17l5-5-5-5v10z"/></svg>
<div class="t" style="left:1790px;top:879px;font-size:18.54px;color:#212121;letter-spacing:-0.186px;">Строк на странице:</div>
<div class="t" style="left:2004px;top:879px;font-size:18.54px;color:#212121;letter-spacing:-0.195px;">10</div>
<svg style="position:absolute;left:2036px;top:871px;" width="36" height="36" viewBox="0 0 24 24"><path fill="#757575" d="M7 10l5 5 5-5z"/></svg>
<div style="position:absolute;left:2003px;top:914px;width:69px;height:1px;background:#8c8c8c"></div>
<div class="t" style="left:2129px;top:879px;font-size:18.54px;color:#212121;letter-spacing:-0.262px;">1-10 из 20504</div>
<svg style="position:absolute;left:2300px;top:871.5px;" width="36" height="36" viewBox="0 0 24 24"><path fill="#bdbdbd" d="M15.41 7.41 14 6l-6 6 6 6 1.41-1.41L10.83 12z"/></svg>
<svg style="position:absolute;left:2375px;top:871px;" width="36" height="36" viewBox="0 0 24 24"><path fill="#757575" d="M10 6 8.59 7.41 13.17 12l-4.58 4.59L10 18l6-6z"/></svg>
</body></html>
